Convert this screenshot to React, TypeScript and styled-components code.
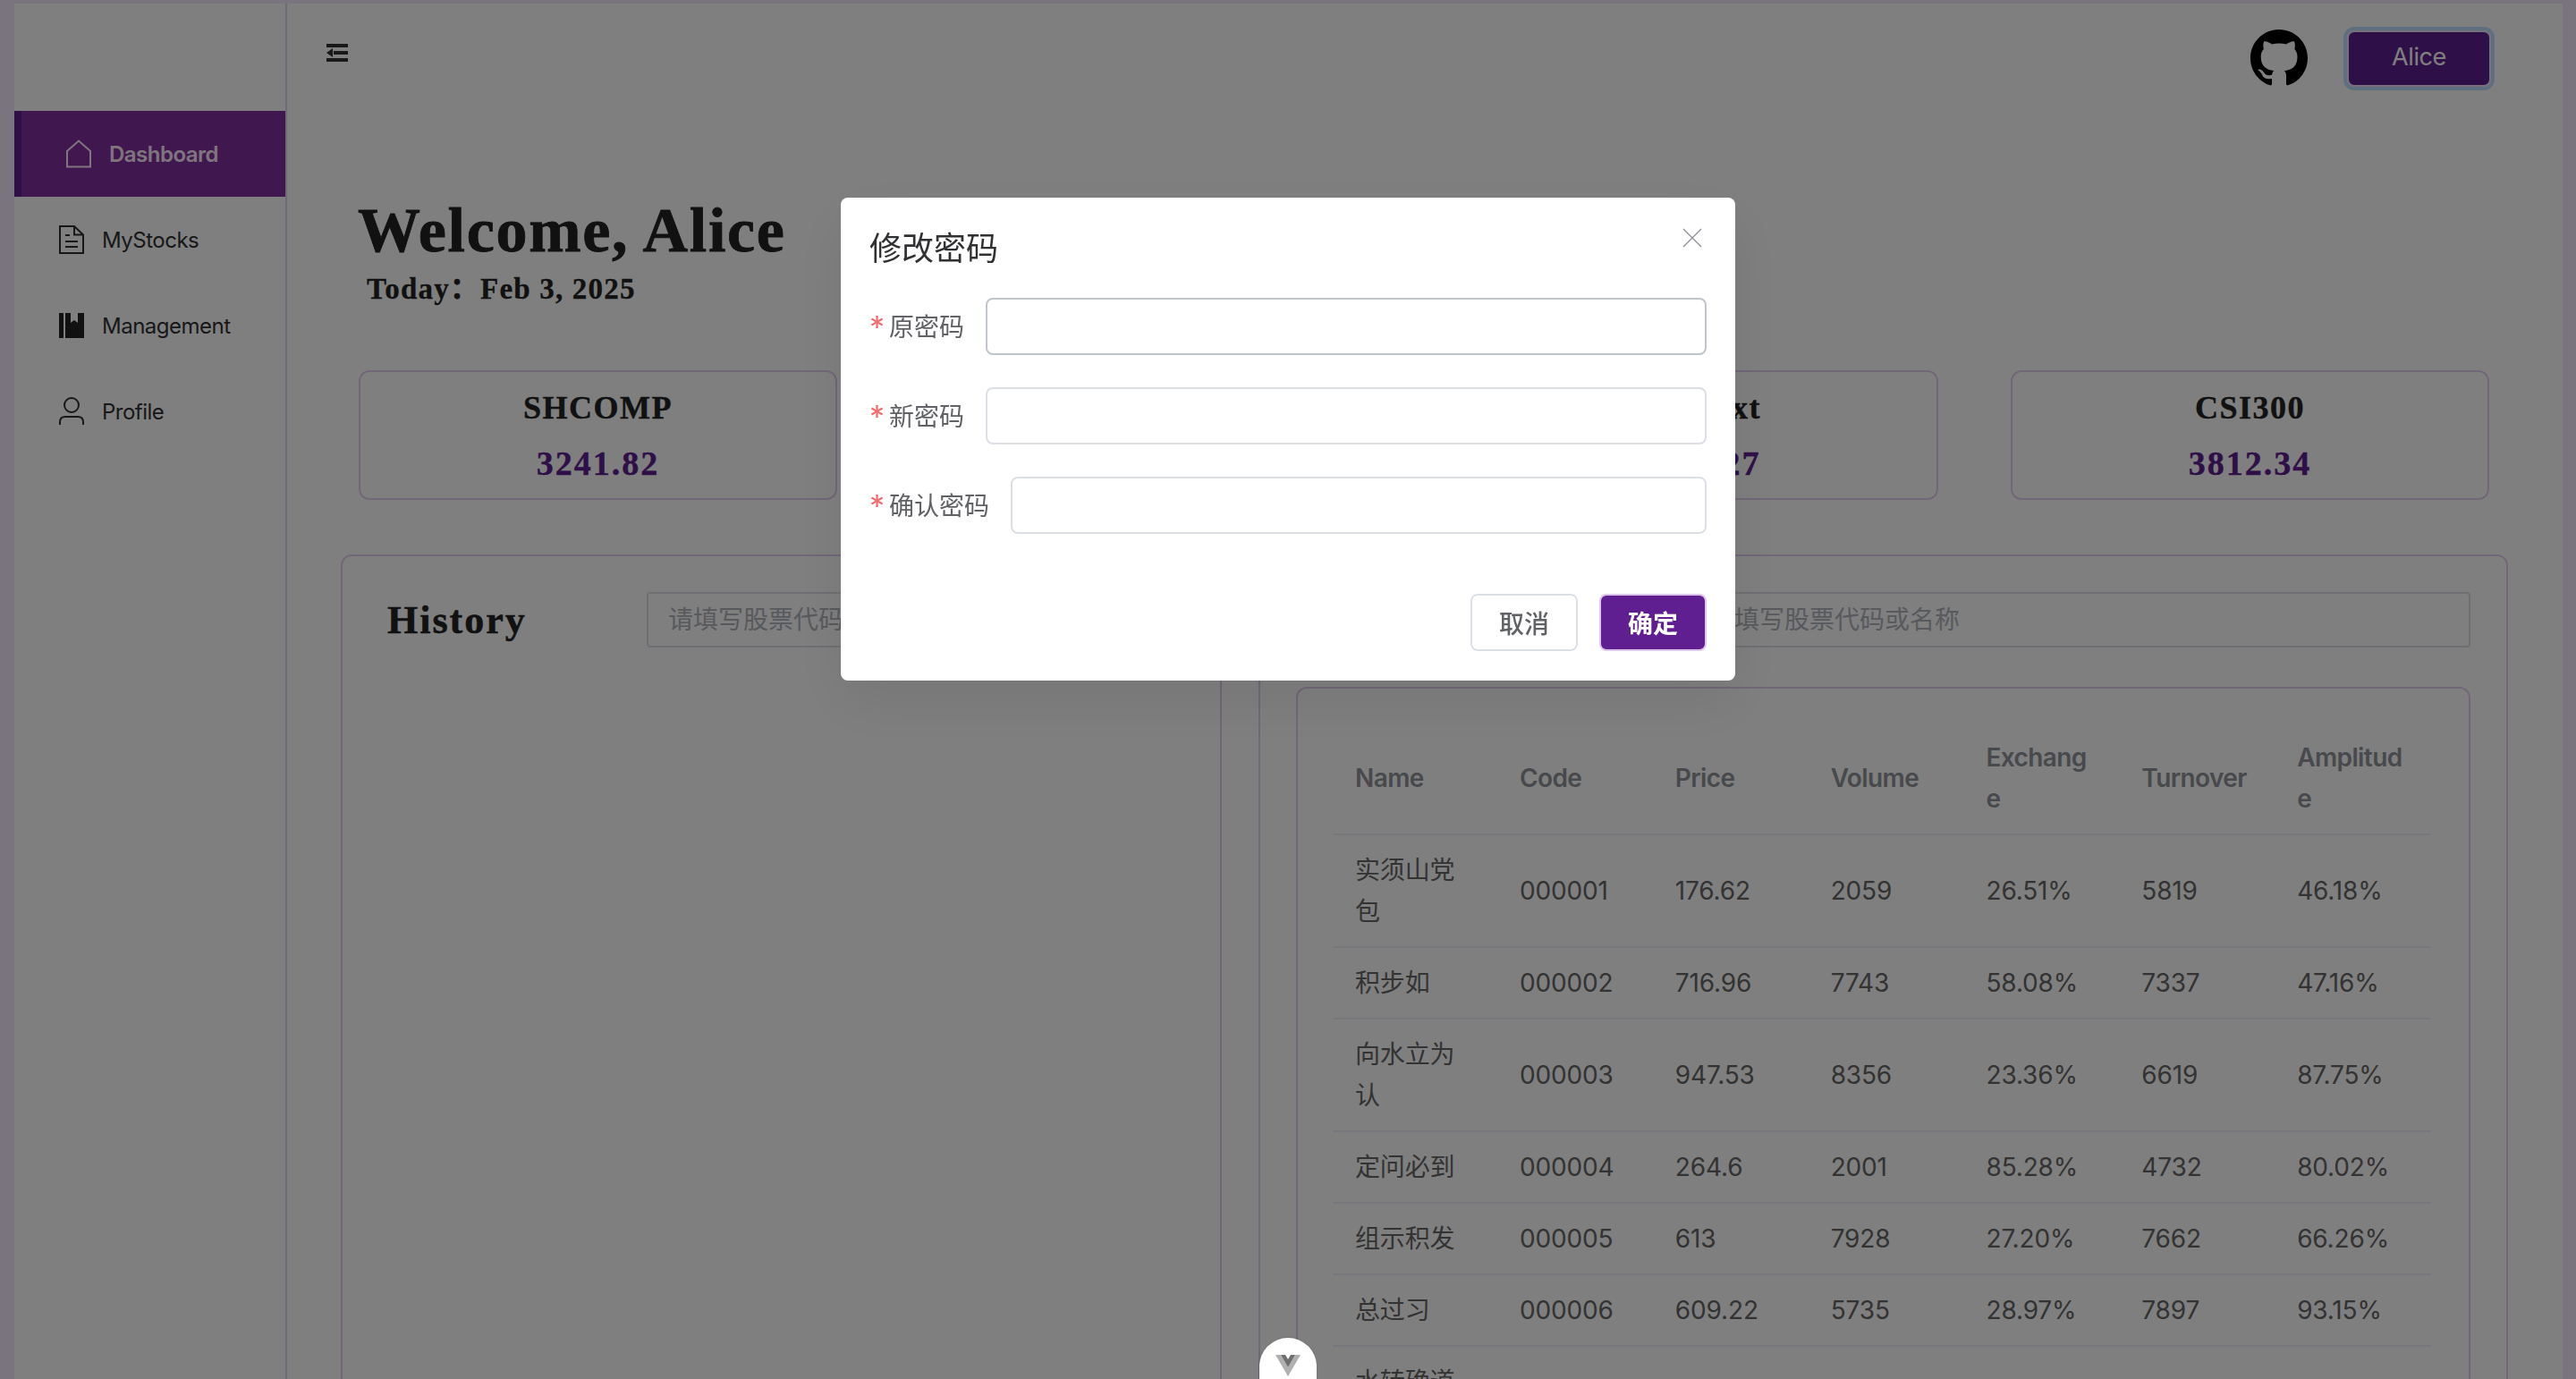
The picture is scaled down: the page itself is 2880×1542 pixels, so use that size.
import { createGlobalStyle, styled } from "styled-components";
import { BsGithub } from "react-icons/bs";

const GlobalStyle = createGlobalStyle`
  html, body {
    margin: 0;
    padding: 0;
    height: 100%;
    overflow: hidden;
  }
  body {
    font-family: Inter, "Noto Sans CJK SC", sans-serif;
  }
  * {
    box-sizing: border-box;
  }
`;

const serif = `"Liberation Serif", "Noto Sans CJK SC", serif`;
const primary = "#5f1f90";
const line = "#e4cdf2";

const Page = styled.div`
  display: flex;
  height: 1542px;
  padding: 4px 15px 0 16px;
  background: #f2e8fa;
  overflow: hidden;
`;

const Sidebar = styled.nav`
  flex: 0 0 305px;
  padding-top: 120px;
  background: #fff;
  border-right: 2px solid ${line};
`;

const MenuItem = styled.a<{ $active?: boolean }>`
  display: flex;
  align-items: center;
  height: 96px;
  gap: 20px;
  padding-left: 42px;
  background: ${({ $active }) => ($active ? "#822e9e" : "transparent")};
  border-left: 8px solid ${({ $active }) => ($active ? primary : "transparent")};
  font-size: 24px;
  letter-spacing: -0.5px;
  font-weight: ${({ $active }) => ($active ? 600 : 400)};
  color: ${({ $active }) => ($active ? "#ffeaff" : "#303133")};
`;

const MenuIcon = styled.svg<{ $active?: boolean }>`
  flex: none;
  width: 28px;
  height: 32px;
  margin-left: ${({ $active }) => ($active ? "8px" : "0")};
  fill: none;
  stroke: currentColor;
  stroke-width: 2;
`;

const Main = styled.main`
  flex: 1;
  min-width: 0;
  display: flex;
  flex-direction: column;
  background: #fff;
  & > * {
    flex: none;
  }
`;

const TopBar = styled.header`
  display: flex;
  align-items: flex-start;
  justify-content: space-between;
  height: 150px;
  padding: 29px 80px 0 43px;
`;

const FoldIcon = styled.svg`
  width: 26px;
  height: 22px;
  margin-top: 15px;
  fill: #333;
`;

const TopRight = styled.div`
  display: flex;
  align-items: center;
  gap: 44px;
`;

const GithubLink = styled.a`
  display: flex;
  font-size: 64px;
  color: #000;
`;

const UserButton = styled.button`
  width: 161px;
  height: 63px;
  padding: 0 0 4px;
  background: ${primary};
  border: 2px solid #f0e2f7;
  border-radius: 8px;
  outline: 4px solid #bce0ff;
  font-family: inherit;
  font-size: 27px;
  letter-spacing: -0.4px;
  color: #fff;
`;

const Welcome = styled.section`
  height: 260px;
  padding: 64px 0 0 79px;
`;

const Title = styled.h1`
  margin: 0;
  font-family: ${serif};
  font-size: 70px;
  line-height: 80px;
  letter-spacing: 1.7px;
  font-weight: 700;
  -webkit-text-stroke: 0.8px #222;
  color: #222;
`;

const Today = styled.p`
  margin: 3px 0 0 10px;
  font-family: ${serif};
  font-size: 33px;
  line-height: 44px;
  letter-spacing: 1.2px;
  font-weight: 700;
  -webkit-text-stroke: 0.3px #222;
  color: #222;
`;

const Stats = styled.section`
  display: flex;
  justify-content: space-between;
  padding: 0 82px 0 80px;
`;

const StatCard = styled.div`
  width: 535px;
  height: 145px;
  padding-top: 11px;
  border: 2px solid ${line};
  border-radius: 12px;
  text-align: center;
  font-family: ${serif};
  font-weight: 700;
`;

const StatName = styled.div`
  font-size: 36px;
  line-height: 58px;
  letter-spacing: 1.5px;
  -webkit-text-stroke: 0.4px #222;
  color: #222;
`;

const StatValue = styled.div`
  font-size: 38px;
  line-height: 66px;
  letter-spacing: 2px;
  -webkit-text-stroke: 0.4px ${primary};
  color: ${primary};
`;

const Panels = styled.section`
  display: flex;
  gap: 41px;
  padding: 61px 60px 0 60px;
`;

const Panel = styled.div<{ $wide?: boolean }>`
  flex: ${({ $wide }) => ($wide ? "0 0 1397px" : "0 0 985px")};
  height: 1100px;
  padding: 40px;
  border: 2px solid ${line};
  border-radius: 12px;
`;

const PanelHead = styled.div<{ $inputLeft: number }>`
  display: grid;
  grid-template-columns: ${({ $inputLeft }) => `${$inputLeft}px`} 1fr;
  align-items: center;
`;

const PanelTitle = styled.h2`
  margin: 0 0 0 10px;
  font-family: ${serif};
  font-size: 44px;
  letter-spacing: 2px;
  font-weight: 700;
  -webkit-text-stroke: 0.5px #222;
  color: #222;
`;

const SearchBox = styled.div`
  height: 62px;
  padding-left: 22px;
  border: 2px solid #dcdfe6;
  border-radius: 4px;
  font-size: 28px;
  line-height: 58px;
  color: #b0b3ba;
`;

const TableCard = styled.div`
  margin-top: 44px;
  padding: 38px 42px 38px 40px;
  border: 2px solid ${line};
  border-radius: 12px;
`;

const Table = styled.table`
  width: 100%;
  table-layout: fixed;
  border-collapse: collapse;
`;

const NameCol = styled.col`
  width: 184px;
`;

const Th = styled.th`
  padding: 16px 24px;
  border-bottom: 2px solid #ebeef5;
  text-align: left;
  font-size: 28px;
  line-height: 46px;
  letter-spacing: -0.6px;
  font-weight: 600;
  word-break: break-all;
  color: #909399;
`;

const Td = styled.td`
  padding: 16px 24px;
  border-bottom: 2px solid #ebeef5;
  font-size: 28px;
  line-height: 46px;
  letter-spacing: -0.15px;
  word-break: break-all;
  color: #666;
`;

const Overlay = styled.div`
  position: fixed;
  inset: 0;
  background: rgba(0, 0, 0, 0.5);
`;

const Dialog = styled.div`
  position: fixed;
  top: 221px;
  left: 940px;
  width: 1000px;
  height: 540px;
  padding: 33px 32px;
  background: #fff;
  border-radius: 8px;
  box-shadow: 0 24px 64px rgba(0, 0, 0, 0.08);
`;

const DialogTitle = styled.h3`
  margin: 0 0 31px;
  font-size: 36px;
  line-height: 48px;
  font-weight: 400;
  color: #303133;
`;

const CloseIcon = styled.svg`
  position: absolute;
  top: 34px;
  right: 37px;
  width: 22px;
  height: 22px;
  stroke: #909399;
  stroke-width: 1.4;
`;

const FormRow = styled.div`
  display: flex;
  align-items: center;
  gap: 24px;
  margin-bottom: 36px;
  font-size: 28px;
  color: #606266;
`;

const Label = styled.label`
  flex: none;
  padding-bottom: 2px;
  white-space: nowrap;
  &::before {
    content: "*";
    display: inline-block;
    width: 22px;
    font-size: 34px;
    line-height: 28px;
    vertical-align: -2px;
    color: #f56c6c;
  }
`;

const Field = styled.input<{ $hover?: boolean }>`
  flex: 1;
  min-width: 0;
  height: 64px;
  background: #fff;
  border: 2px solid ${({ $hover }) => ($hover ? "#c0c4cc" : "#dcdfe6")};
  border-radius: 8px;
`;

const Footer = styled.div`
  display: flex;
  justify-content: flex-end;
  gap: 24px;
  margin-top: 67px;
`;

const ActionButton = styled.button<{ $primary?: boolean }>`
  width: 120px;
  height: 64px;
  padding: 0;
  background: ${({ $primary }) => ($primary ? primary : "#fff")};
  border: 2px solid ${({ $primary }) => ($primary ? "#dcc6ea" : "#dcdfe6")};
  border-radius: 8px;
  font-family: inherit;
  font-size: 28px;
  font-weight: ${({ $primary }) => ($primary ? 600 : 500)};
  color: ${({ $primary }) => ($primary ? "#fff" : "#606266")};
`;

const DevtoolsButton = styled.div`
  position: fixed;
  top: 1496px;
  left: 1408px;
  width: 64px;
  height: 90px;
  padding-top: 19px;
  display: flex;
  justify-content: center;
  background: #fff;
  border-radius: 32px;
  box-shadow: 0 0 4px rgba(0, 0, 0, 0.1);
`;

const stocks = [
  ["实须山党包", "000001", "176.62", "2059", "26.51%", "5819", "46.18%"],
  ["积步如", "000002", "716.96", "7743", "58.08%", "7337", "47.16%"],
  ["向水立为认", "000003", "947.53", "8356", "23.36%", "6619", "87.75%"],
  ["定问必到", "000004", "264.6", "2001", "85.28%", "4732", "80.02%"],
  ["组示积发", "000005", "613", "7928", "27.20%", "7662", "66.26%"],
  ["总过习", "000006", "609.22", "5735", "28.97%", "7897", "93.15%"],
  ["水转确道者", "000007", "", "", "", "", ""],
];

const columns = ["Name", "Code", "Price", "Volume", "Exchange", "Turnover", "Amplitude"];

const indices = [
  { name: "SHCOMP", value: "3241.82" },
  { name: "SZCOMP", value: "10346.51" },
  { name: "ChiNext", value: "2098.27" },
  { name: "CSI300", value: "3812.34" },
];

export default function App() {
  return (
    <>
      <GlobalStyle />
      <Page>
        <Sidebar>
          <MenuItem $active>
            <MenuIcon $active viewBox="0 0 28 32">
              <path d="M1 30.5V13L14 1.5 27 13v17.5z" />
            </MenuIcon>
            Dashboard
          </MenuItem>
          <MenuItem>
            <MenuIcon viewBox="0 0 28 32">
              <path d="M1 1h16l10 9.5V31H1zM17 1v9.5h10M7 11h5M7 18h14M7 24h14" />
            </MenuIcon>
            MyStocks
          </MenuItem>
          <MenuItem>
            <MenuIcon viewBox="0 0 28 32">
              <path d="M0 2h5v28H0zM7 2h6v11l4-3 4 3V2h7v28H7z" fill="#222" stroke="none" />
            </MenuIcon>
            Management
          </MenuItem>
          <MenuItem>
            <MenuIcon viewBox="0 0 28 32">
              <circle cx="14" cy="9" r="8" />
              <path d="M1 31v-3c0-4 2-6 6-6h14c4 0 6 2 6 6v3" />
            </MenuIcon>
            Profile
          </MenuItem>
        </Sidebar>
        <Main>
          <TopBar>
            <FoldIcon viewBox="0 0 26 22">
              <path d="M1 1h24v4H1zM1 17h24v4H1zM9 9h16v4H9zM1 11l7-5v10z" />
            </FoldIcon>
            <TopRight>
              <GithubLink>
                <BsGithub />
              </GithubLink>
              <UserButton>Alice</UserButton>
            </TopRight>
          </TopBar>
          <Welcome>
            <Title>Welcome, Alice</Title>
            <Today>Today：Feb 3, 2025</Today>
          </Welcome>
          <Stats>
            {indices.map((item) => (
              <StatCard key={item.name}>
                <StatName>{item.name}</StatName>
                <StatValue>{item.value}</StatValue>
              </StatCard>
            ))}
          </Stats>
          <Panels>
            <Panel>
              <PanelHead $inputLeft={300}>
                <PanelTitle>History</PanelTitle>
                <SearchBox>请填写股票代码或名称</SearchBox>
              </PanelHead>
            </Panel>
            <Panel $wide>
              <PanelHead $inputLeft={438}>
                <PanelTitle>Stocks</PanelTitle>
                <SearchBox>请填写股票代码或名称</SearchBox>
              </PanelHead>
              <TableCard>
                <Table>
                  <colgroup>
                    <NameCol />
                  </colgroup>
                  <thead>
                    <tr>
                      {columns.map((col) => (
                        <Th key={col}>{col}</Th>
                      ))}
                    </tr>
                  </thead>
                  <tbody>
                    {stocks.map((row) => (
                      <tr key={row[1]}>
                        {row.map((cell, i) => (
                          <Td key={i}>{cell}</Td>
                        ))}
                      </tr>
                    ))}
                  </tbody>
                </Table>
              </TableCard>
            </Panel>
          </Panels>
        </Main>
      </Page>
      <Overlay />
      <Dialog>
        <DialogTitle>修改密码</DialogTitle>
        <CloseIcon viewBox="0 0 22 22">
          <path d="M1 1l20 20M21 1L1 21" />
        </CloseIcon>
        <FormRow>
          <Label>原密码</Label>
          <Field $hover />
        </FormRow>
        <FormRow>
          <Label>新密码</Label>
          <Field />
        </FormRow>
        <FormRow>
          <Label>确认密码</Label>
          <Field />
        </FormRow>
        <Footer>
          <ActionButton>取消</ActionButton>
          <ActionButton $primary>确定</ActionButton>
        </Footer>
      </Dialog>
      <DevtoolsButton>
        <svg width="28" height="24" viewBox="0 0 28 24">
          <path d="M22 0l-8 14L6 0H0l14 24L28 0z" fill="#b0b0b0" />
          <path d="M22 0l-8 14L6 0h5l3 5 3-5z" fill="#6e6e6e" />
        </svg>
      </DevtoolsButton>
    </>
  );
}
